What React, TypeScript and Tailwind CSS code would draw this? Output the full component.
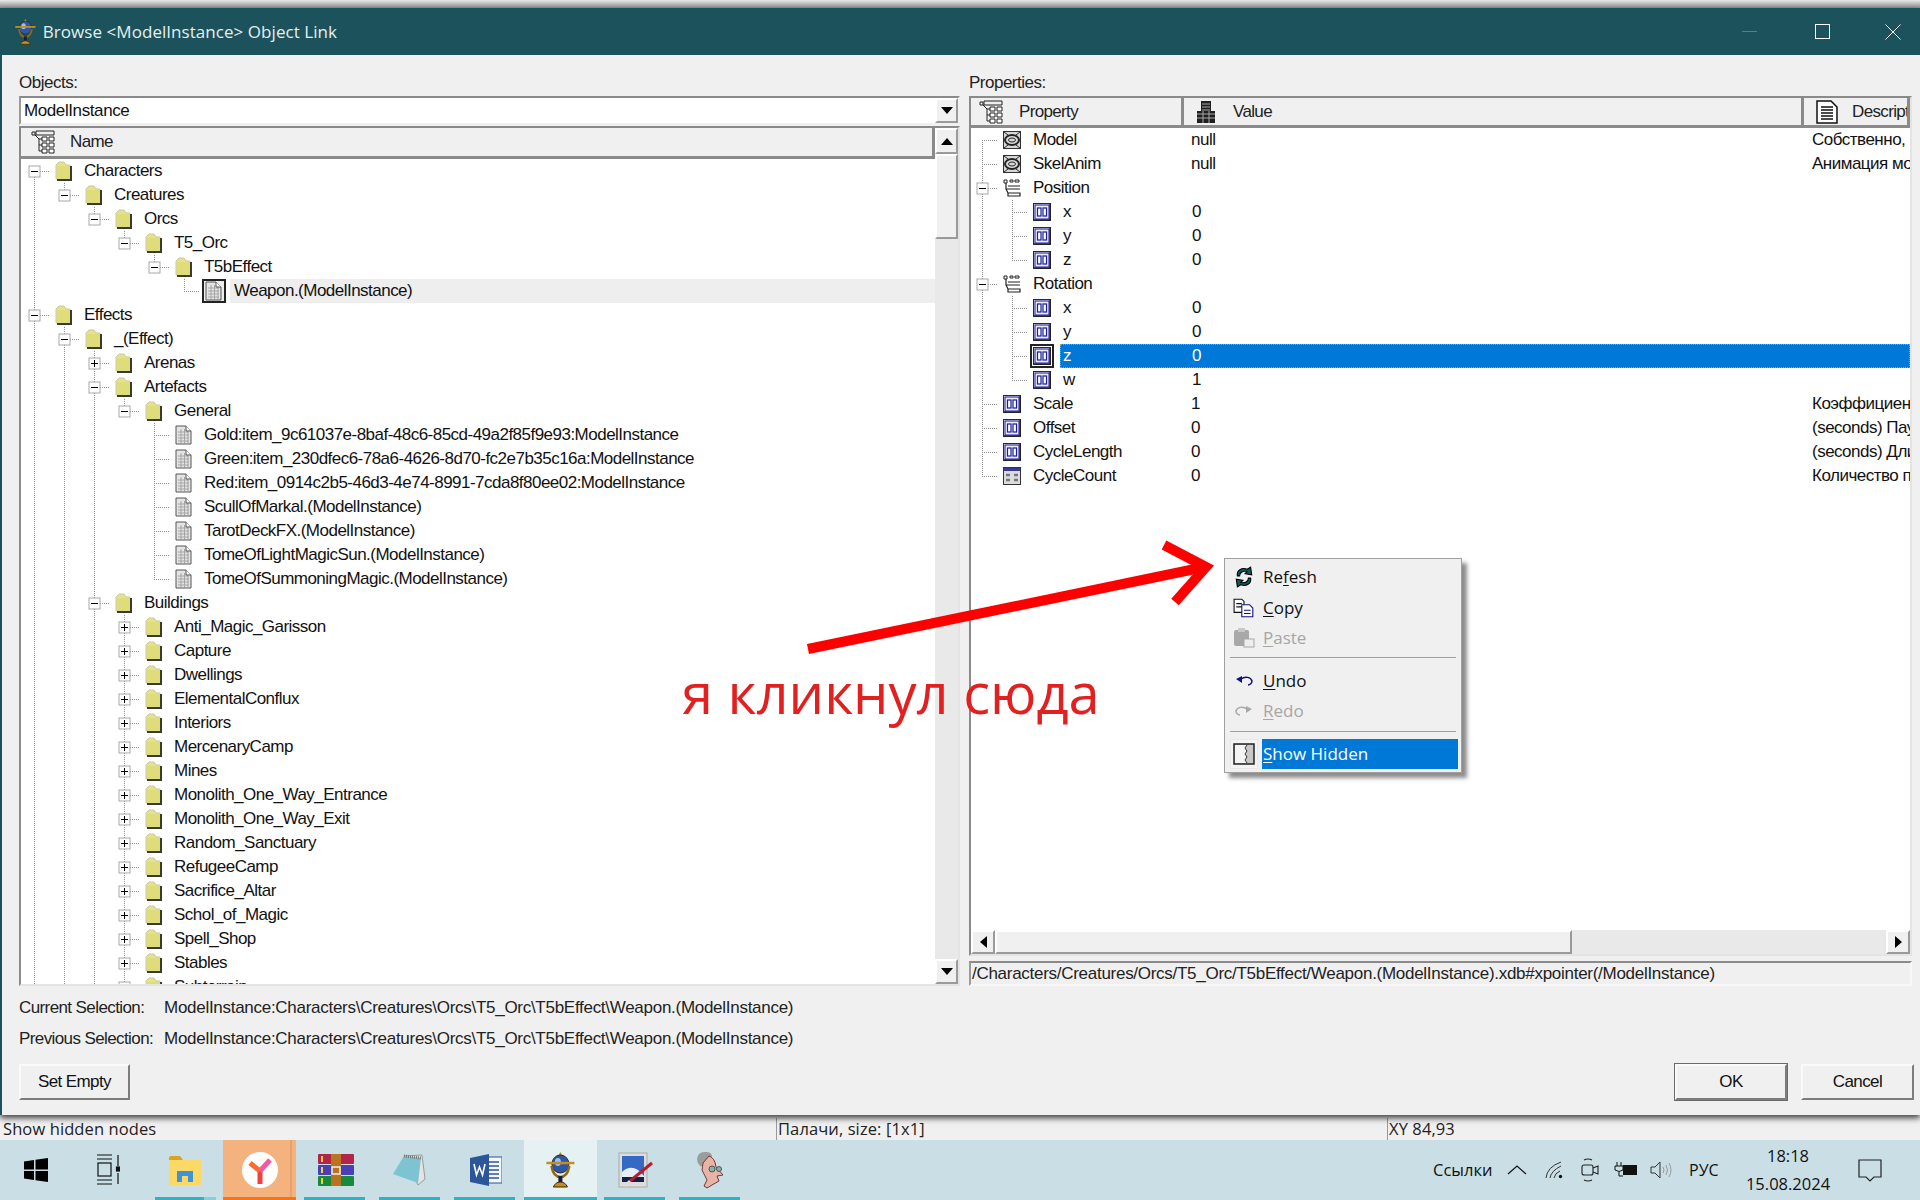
import type { ReactNode } from 'react';

type TreeRow = { name: string; level: number; open?: boolean; file?: boolean; selected?: boolean };

const treeRows: TreeRow[] = [
  { name: 'Characters', level: 0, open: true },
  { name: 'Creatures', level: 1, open: true },
  { name: 'Orcs', level: 2, open: true },
  { name: 'T5_Orc', level: 3, open: true },
  { name: 'T5bEffect', level: 4, open: true },
  { name: 'Weapon.(ModelInstance)', level: 5, file: true, selected: true },
  { name: 'Effects', level: 0, open: true },
  { name: '_(Effect)', level: 1, open: true },
  { name: 'Arenas', level: 2 },
  { name: 'Artefacts', level: 2, open: true },
  { name: 'General', level: 3, open: true },
  { name: 'Gold:item_9c61037e-8baf-48c6-85cd-49a2f85f9e93:ModelInstance', level: 4, file: true },
  { name: 'Green:item_230dfec6-78a6-4626-8d70-fc2e7b35c16a:ModelInstance', level: 4, file: true },
  { name: 'Red:item_0914c2b5-46d3-4e74-8991-7cda8f80ee02:ModelInstance', level: 4, file: true },
  { name: 'ScullOfMarkal.(ModelInstance)', level: 4, file: true },
  { name: 'TarotDeckFX.(ModelInstance)', level: 4, file: true },
  { name: 'TomeOfLightMagicSun.(ModelInstance)', level: 4, file: true },
  { name: 'TomeOfSummoningMagic.(ModelInstance)', level: 4, file: true },
  { name: 'Buildings', level: 2, open: true },
  { name: 'Anti_Magic_Garisson', level: 3 },
  { name: 'Capture', level: 3 },
  { name: 'Dwellings', level: 3 },
  { name: 'ElementalConflux', level: 3 },
  { name: 'Interiors', level: 3 },
  { name: 'MercenaryCamp', level: 3 },
  { name: 'Mines', level: 3 },
  { name: 'Monolith_One_Way_Entrance', level: 3 },
  { name: 'Monolith_One_Way_Exit', level: 3 },
  { name: 'Random_Sanctuary', level: 3 },
  { name: 'RefugeeCamp', level: 3 },
  { name: 'Sacrifice_Altar', level: 3 },
  { name: 'Schol_of_Magic', level: 3 },
  { name: 'Spell_Shop', level: 3 },
  { name: 'Stables', level: 3 },
  { name: 'Subterrain', level: 3 },
];

// rows below the visible part, the guide lines run on to them
const hiddenLevels = [3, 2, 1, 0];

function continues(index: number, level: number, levels: number[]) {
  for (let i = index + 1; i < levels.length; i++) {
    if (levels[i] === level) return true;
    if (levels[i] < level) return false;
  }
  return false;
}

function GuideCell({ show }: { show: boolean }) {
  return (
    <svg width="30" height="24" className="shrink-0">
      {show && <line x1="15.5" y1="0" x2="15.5" y2="24" stroke="#8f8f8f" strokeDasharray="1 1" />}
    </svg>
  );
}

function BranchCell({
  top,
  bottom,
  toggle,
}: {
  top: boolean;
  bottom: boolean;
  toggle?: 'open' | 'closed';
}) {
  return (
    <svg width="30" height="24" className="shrink-0">
      {top && <line x1="15.5" y1="0" x2="15.5" y2="12" stroke="#8f8f8f" strokeDasharray="1 1" />}
      {bottom && <line x1="15.5" y1="12" x2="15.5" y2="24" stroke="#8f8f8f" strokeDasharray="1 1" />}
      <line x1="15" y1="12.5" x2="30" y2="12.5" stroke="#8f8f8f" strokeDasharray="1 1" />
      {toggle && (
        <g>
          <rect x="10" y="7" width="11" height="11" fill="#fff" stroke="#a8a8a8" />
          <line x1="12" y1="12.5" x2="19" y2="12.5" stroke="#000" />
          {toggle === 'closed' && <line x1="15.5" y1="9" x2="15.5" y2="16" stroke="#000" />}
        </g>
      )}
    </svg>
  );
}

function FolderIcon() {
  return (
    <svg width="18" height="20" viewBox="0 0 18 20" className="shrink-0">
      <path d="M1 4 L4 1 H9 L11 4 H15 V18 H1 Z" fill="#e4e28c" stroke="#c9c9a0" />
      <rect x="2" y="5" width="13" height="13" fill="#dfdc7a" />
      <path d="M16 5 V19 H2" fill="none" stroke="#3a3a30" strokeWidth="2" />
    </svg>
  );
}

function FileIcon({ boxed }: { boxed?: boolean }) {
  const page = (
    <svg width="18" height="20" viewBox="0 0 18 20">
      <path d="M1 1 H11 L16 6 V19 H1 Z" fill="#e4e4e4" stroke="#555" />
      <path d="M3 7 H14 M3 10 H14 M3 13 H14 M3 16 H14 M6 4 V18 M9.5 4 V18 M13 7 V18" stroke="#a5a5a5" fill="none" />
      <path d="M11 1 V6 H16" fill="#fff" stroke="#555" />
    </svg>
  );
  if (boxed) {
    return (
      <div className="flex h-[24px] w-[24px] shrink-0 items-center justify-center border-2 border-[#222] bg-[#ededed]">
        {page}
      </div>
    );
  }
  return <div className="flex h-[24px] w-[24px] shrink-0 items-center justify-center">{page}</div>;
}

function ColumnTreeIcon() {
  return (
    <svg width="24" height="24" viewBox="0 0 24 24" className="shrink-0">
      <path d="M1 2 H4 V5 H1 Z M5 3 H23 M4 5 L8 9 V21 M8 9 H11 M8 15 H11 M8 21 H11" fill="none" stroke="#222" />
      <path d="M5 1 H23 V5 H5 Z" fill="#eee" stroke="#222" />
      <path d="M11 7 H16 V11 H11 Z M18 7 H23 V11 H18 Z M11 13 H16 V17 H11 Z M18 13 H23 V17 H18 Z M11 19 H16 V23 H11 Z M18 19 H23 V23 H18 Z" fill="#fff" stroke="#222" />
    </svg>
  );
}

function ValueColumnIcon() {
  return (
    <svg width="20" height="24" viewBox="0 0 20 24" className="shrink-0">
      <path d="M5 1 H15 V11 H19 V23 H1 V11 H5 Z" fill="#1f1f1f" />
      <path d="M6 4 H14 M6 7 H14 M6 10 H14 M1 14 H19 M1 18 H19 M7 11 V23 M13 11 V23" stroke="#aaa" />
    </svg>
  );
}

function DescColumnIcon() {
  return (
    <svg width="22" height="24" viewBox="0 0 22 24" className="shrink-0">
      <path d="M1 1 H15 L21 7 V23 H1 Z" fill="#fff" stroke="#111" strokeWidth="1.5" />
      <path d="M5 7 H17 M5 10 H17 M5 13 H17 M5 16 H17 M5 19 H17" stroke="#111" strokeWidth="1.5" />
    </svg>
  );
}

function ModelIcon() {
  return (
    <svg width="18" height="18" viewBox="0 0 18 18" className="shrink-0">
      <rect width="18" height="18" fill="#303030" />
      <rect x="1" y="1" width="16" height="16" fill="#d8d8d8" />
      <ellipse cx="9" cy="9" rx="7" ry="5" fill="none" stroke="#222" strokeWidth="2" />
      <ellipse cx="9" cy="9" rx="3.5" ry="2" fill="none" stroke="#222" />
      <path d="M1 1 L5 4 M17 1 L13 4 M1 17 L5 14 M17 17 L13 14" stroke="#222" />
    </svg>
  );
}

function GroupIcon() {
  return (
    <svg width="18" height="18" viewBox="0 0 18 18" className="shrink-0">
      <path d="M1 1 H4 V4 H1 Z M7 1 H10 V3 H7 Z M12 1 H16 V3 H12 Z" fill="#fff" stroke="#222" />
      <path d="M3 4 V10 H17 M5 7 H17 M3 10 L5 14 H17 V17 H5 V14" fill="none" stroke="#222" strokeWidth="1.2" />
    </svg>
  );
}

function NumberIcon() {
  return (
    <svg width="18" height="18" viewBox="0 0 18 18" className="shrink-0">
      <rect x="0.5" y="0.5" width="17" height="17" fill="#ececf2" stroke="#2a2a2a" />
      <path d="M17 1 V17 H1" fill="none" stroke="#222" strokeWidth="1.5" />
      <rect x="2" y="2" width="14" height="14" fill="none" stroke="#1a1aa0" />
      <rect x="4.5" y="5" width="3.5" height="8" fill="#fff" stroke="#1a1aa0" strokeWidth="1.2" />
      <rect x="10" y="5" width="3.5" height="8" fill="#fff" stroke="#1a1aa0" strokeWidth="1.2" />
    </svg>
  );
}

function CountIcon() {
  return (
    <svg width="18" height="18" viewBox="0 0 18 18" className="shrink-0">
      <rect x="0.5" y="0.5" width="17" height="17" fill="#dcdce0" stroke="#333" />
      <rect x="1" y="1" width="16" height="3" fill="#3a3a90" />
      <path d="M3 8 H7 M11 8 H15 M3 13 H7 M11 13 H15" stroke="#777" strokeWidth="2.5" />
    </svg>
  );
}

function TreeText({ children }: { children: ReactNode }) {
  return <span className="whitespace-nowrap text-[17px] tracking-[-0.52px] text-[#111]">{children}</span>;
}

function ObjectsTree() {
  const levels = [...treeRows.map((r) => r.level), ...hiddenLevels];
  return (
    <div className="min-h-0 flex-1 overflow-hidden">
      {treeRows.map((row, i) => {
        const guides = Array.from({ length: row.level }, (_, k) => continues(i, k, levels));
        return (
          <div key={row.name} className="-ml-[2px] flex h-6 items-center">
            {guides.map((show, k) => (
              <GuideCell key={k} show={show} />
            ))}
            <BranchCell
              top={i > 0}
              bottom={continues(i, row.level, levels)}
              toggle={row.file ? undefined : row.open ? 'open' : 'closed'}
            />
            <div className="flex w-[30px] shrink-0 justify-center">
              {row.file ? <FileIcon boxed={row.selected} /> : <FolderIcon />}
            </div>
            {row.selected ? (
              <div className="ml-[1px] flex h-6 flex-1 items-center bg-[#eeeeee] pl-[4px]">
                <TreeText>{row.name}</TreeText>
              </div>
            ) : (
              <div className="pl-[5px]">
                <TreeText>{row.name}</TreeText>
              </div>
            )}
          </div>
        );
      })}
    </div>
  );
}

type PropRow = {
  name: string;
  value?: string;
  desc?: string;
  level: number;
  icon: 'model' | 'group' | 'number' | 'count';
  open?: boolean;
  selected?: boolean;
  last?: boolean;
};

const propRows: PropRow[] = [
  { name: 'Model', value: 'null', desc: 'Собственно, модель', level: 0, icon: 'model' },
  { name: 'SkelAnim', value: 'null', desc: 'Анимация модели', level: 0, icon: 'model' },
  { name: 'Position', level: 0, icon: 'group', open: true },
  { name: 'x', value: '0', level: 1, icon: 'number' },
  { name: 'y', value: '0', level: 1, icon: 'number' },
  { name: 'z', value: '0', level: 1, icon: 'number', last: true },
  { name: 'Rotation', level: 0, icon: 'group', open: true },
  { name: 'x', value: '0', level: 1, icon: 'number' },
  { name: 'y', value: '0', level: 1, icon: 'number' },
  { name: 'z', value: '0', level: 1, icon: 'number', selected: true },
  { name: 'w', value: '1', level: 1, icon: 'number', last: true },
  { name: 'Scale', value: '1', desc: 'Коэффициент', level: 0, icon: 'number' },
  { name: 'Offset', value: '0', desc: '(seconds) Пауза', level: 0, icon: 'number' },
  { name: 'CycleLength', value: '0', desc: '(seconds) Длина', level: 0, icon: 'number' },
  { name: 'CycleCount', value: '0', desc: 'Количество повторов', level: 0, icon: 'count', last: true },
];

function PropIcon({ icon }: { icon: PropRow['icon'] }) {
  if (icon === 'model') return <ModelIcon />;
  if (icon === 'group') return <GroupIcon />;
  if (icon === 'count') return <CountIcon />;
  return <NumberIcon />;
}

function PropertiesRows() {
  return (
    <div className="min-h-0 flex-1 overflow-hidden">
      {propRows.map((row, i) => {
        const isLastTop = i >= 14;
        return (
          <div key={i} className="-ml-1 flex h-6 items-center">
            {row.level === 1 && <GuideCell show />}
            <BranchCell
              top={i > 0}
              bottom={row.level === 0 ? !isLastTop : !row.last}
              toggle={row.open ? 'open' : undefined}
            />
            <div className="flex w-[30px] shrink-0 justify-center">
              {row.selected ? (
                <div className="flex h-6 w-[24px] shrink-0 items-center justify-center border-2 border-[#222]">
                  <NumberIcon />
                </div>
              ) : (
                <PropIcon icon={row.icon} />
              )}
            </div>
            <div
              className={
                row.selected
                  ? 'ml-[3px] flex h-6 flex-1 items-center border border-dotted border-[#d98c3c] bg-[#0078d7] pl-[2px] text-white'
                  : 'ml-[6px] flex h-6 flex-1 items-center text-[#111]'
              }
            >
              <span
                className={`shrink-0 whitespace-nowrap text-[17px] tracking-[-0.5px] ${
                  row.level === 1 ? 'w-[129px]' : 'w-[158px]'
                }`}
              >
                {row.name}
              </span>
              <span className="w-[621px] shrink-0 text-[17px] tracking-[-0.5px]">{row.value}</span>
              <span className="whitespace-nowrap text-[17px] tracking-[-0.5px]">{row.desc}</span>
            </div>
          </div>
        );
      })}
    </div>
  );
}

function HeaderCell({
  icon,
  label,
  className,
}: {
  icon: ReactNode;
  label: string;
  className: string;
}) {
  return (
    <div
      className={`flex items-center border-b-[3px] border-r-[3px] border-b-[#8a8a8a] border-r-[#8a8a8a] bg-[#f0f0f0] ${className}`}
    >
      {icon}
      <span className="whitespace-nowrap text-[17px] tracking-[-0.65px] text-[#222]">{label}</span>
    </div>
  );
}

function ScrollBtn({ dir, className }: { dir: 'up' | 'down' | 'left' | 'right'; className: string }) {
  const pts = {
    up: '0,8 12,8 6,1',
    down: '0,1 12,1 6,8',
    left: '8,0 8,12 1,6',
    right: '1,0 1,12 8,6',
  }[dir];
  const size = dir === 'up' || dir === 'down' ? 'w-[12px] h-[9px]' : 'w-[9px] h-[12px]';
  return (
    <div
      className={`flex shrink-0 items-center justify-center border-2 border-b-[#9a9a9a] border-l-white border-r-[#9a9a9a] border-t-white bg-[#f0f0f0] ${className}`}
    >
      <svg className={size}>
        <polygon points={pts} fill="#000" />
      </svg>
    </div>
  );
}

function RaisedButton({ label, className }: { label: string; className: string }) {
  return (
    <div
      className={`flex h-[36px] items-center justify-center border-2 border-b-[#7d7d7d] border-l-[#fafafa] border-r-[#7d7d7d] border-t-[#fafafa] bg-[#f0f0f0] text-[17px] tracking-[-0.6px] text-[#111] ${className}`}
    >
      {label}
    </div>
  );
}

function MenuItem({ icon, disabled, height, children }: { icon: ReactNode; disabled?: boolean; height: string; children: ReactNode }) {
  return (
    <div className={`flex items-center ${height}`}>
      <div className="flex w-[38px] shrink-0 justify-center">{icon}</div>
      <span className={`font-['Open_Sans'] text-[17px] ${disabled ? 'text-[#a6a6a6]' : 'text-[#111]'}`}>{children}</span>
    </div>
  );
}

function underlined(text: string, pos: number) {
  return (
    <>
      {text.slice(0, pos)}
      <span className="underline underline-offset-2">{text[pos]}</span>
      {text.slice(pos + 1)}
    </>
  );
}

function ContextMenu() {
  return (
    <div className="absolute left-[1224px] top-[558px] z-20 h-[215px] w-[238px] border border-[#a0a0a0] bg-[#f0f0f0] pt-[3px] shadow-[5px_5px_4px_rgba(0,0,0,0.45)]">
      <MenuItem
        height="h-[30px]"
        icon={
          <svg width="22" height="22" viewBox="0 0 20 20">
            <path d="M4 9 C3 4 8 1 13 3 L16 1 L17 8 L11 7 L13 5 C9 4 6 6 6 9 Z" fill="#0b5d5d" stroke="#000" />
            <path d="M16 11 C17 16 12 19 7 17 L4 19 L3 12 L9 13 L7 15 C11 16 14 14 14 11 Z" fill="#0b5d5d" stroke="#000" />
          </svg>
        }
      >
        {underlined('Refesh', 2)}
      </MenuItem>
      <MenuItem
        height="h-[31px]"
        icon={
          <svg width="22" height="20" viewBox="0 0 20 18">
            <path d="M1 1 H8 L10 3 V13 H1 Z" fill="#fff" stroke="#111" />
            <path d="M3 5 H8 M3 8 H8" stroke="#111" />
            <path d="M8 6 H15 L18 9 V17 H8 Z" fill="#fff" stroke="#101080" />
            <path d="M10 11 H16 M10 14 H16" stroke="#101080" />
          </svg>
        }
      >
        {underlined('Copy', 0)}
      </MenuItem>
      <MenuItem
        height="h-[30px]"
        disabled
        icon={
          <svg width="22" height="20" viewBox="0 0 22 20">
            <rect x="1" y="2" width="15" height="16" rx="2" fill="#a8a8a8" />
            <rect x="5" y="0" width="7" height="4" fill="#c8c8c8" />
            <rect x="11" y="11" width="10" height="8" fill="#eee" stroke="#a8a8a8" />
          </svg>
        }
      >
        {underlined('Paste', 0)}
      </MenuItem>
      <div className="mx-[5px] mb-[8px] mt-[4px] h-px bg-[#a0a0a0]" />
      <MenuItem
        height="h-[30px]"
        icon={
          <svg width="20" height="12" viewBox="0 0 20 12">
            <path d="M2 4 L8 1 V8 Z" fill="#101080" />
            <path d="M7 4 C11 1 17 2 18 6 C18 8 16 10 14 10" fill="none" stroke="#101080" strokeWidth="1.5" />
          </svg>
        }
      >
        {underlined('Undo', 0)}
      </MenuItem>
      <MenuItem
        height="h-[30px]"
        disabled
        icon={
          <svg width="20" height="12" viewBox="0 0 20 12">
            <path d="M18 4 L12 1 V8 Z" fill="#a8a8a8" />
            <path d="M13 4 C9 1 3 2 2 6 C2 8 4 10 6 10" fill="none" stroke="#a8a8a8" strokeWidth="1.5" />
          </svg>
        }
      >
        {underlined('Redo', 0)}
      </MenuItem>
      <div className="mx-[5px] mb-[7px] mt-[5px] h-px bg-[#a0a0a0]" />
      <div className="flex h-[30px] items-center pl-[5px] pr-[3px]">
        <div className="flex h-[30px] w-[28px] shrink-0 items-center justify-center border border-[#e8e8e8] bg-[#f4f4f4]">
          <svg width="22" height="22" viewBox="0 0 22 22">
            <rect x="1" y="1" width="20" height="20" fill="#c8c8c8" stroke="#222" strokeWidth="1.5" />
            <rect x="2" y="2" width="11" height="18" fill="#f4f4f4" />
            <path d="M14 2 L12 5 L14 8 L12 11 L14 14 L12 17 L14 20" fill="none" stroke="#333" />
          </svg>
        </div>
        <div className="ml-[4px] flex h-[30px] flex-1 items-center bg-[#0078d7] pl-[1px] font-['Open_Sans'] text-[17px] text-white">
          {underlined('Show Hidden', 0)}
        </div>
      </div>
    </div>
  );
}

function AnnotationArrow() {
  return (
    <svg className="absolute left-0 top-0 z-10" width="1920" height="1200">
      <path d="M808 649 L1200 568" stroke="#ff0000" strokeWidth="10" fill="none" />
      <path d="M1164 545 L1206 567 L1175 602" stroke="#ff0000" strokeWidth="10" fill="none" />
    </svg>
  );
}

function TaskButton({ children, active, bar, className }: { children: ReactNode; active?: boolean; bar?: string; className?: string }) {
  return (
    <div className={`relative flex h-full w-[75px] shrink-0 items-center justify-center ${className ?? ''}`}>
      {active && <div className="absolute inset-y-0 left-[1px] right-[1px] bg-[#e6f1f4]" />}
      <div className="relative">{children}</div>
      {bar && <div className={`absolute bottom-0 h-[3px] bg-[#2fb3c4] ${bar}`} />}
    </div>
  );
}

function Taskbar() {
  return (
    <div className="flex h-[60px] items-center bg-[#c9dfe5]">
      <div className="flex h-full w-[72px] shrink-0 items-center justify-center">
        <svg width="24" height="24" viewBox="0 0 24 24">
          <path d="M0 3.5 L10 2 V11.5 H0 Z M11.5 1.8 L24 0 V11.5 H11.5 Z M0 13 H10 V22 L0 20.5 Z M11.5 13 H24 V24 L11.5 22.2 Z" fill="#000" />
        </svg>
      </div>
      <div className="flex h-full w-[76px] shrink-0 items-center justify-center pr-[4px]">
        <svg width="24" height="36" viewBox="0 0 24 36" fill="none" stroke="#111" strokeWidth="1.2">
          <path d="M1 3 H16 M1 7 H16" />
          <rect x="2" y="11" width="13" height="13" />
          <path d="M1 28 H16 M1 32 H16" />
          <path d="M22 3 V14 M22 21 V32" />
          <rect x="20.5" y="15" width="3" height="4" fill="#111" />
        </svg>
      </div>
      <TaskButton bar="left-[7px] w-[61px] bg-gradient-to-r from-[#2fb3c4] from-80% to-[#86d0da] to-80%" className="pr-[2px]">
        <svg width="32" height="30" viewBox="0 0 32 30">
          <path d="M0 3 Q0 1 2 1 H11 L14 5 H0 Z" fill="#d9a520" />
          <rect x="0" y="5" width="32" height="25" rx="1" fill="#fcd967" />
          <path d="M8 16 H24 V27 H19 V21 H13 V27 H8 Z" fill="#3f94d6" />
        </svg>
      </TaskButton>
      <div className="relative flex h-full w-[73px] shrink-0 items-center justify-center bg-[#f4b27e]">
        <svg width="36" height="36" viewBox="0 0 36 36">
          <circle cx="18" cy="18" r="18" fill="#fff" />
          <path d="M18 32 V19" stroke="#f43f3f" strokeWidth="5" />
          <path d="M8 11 L18 19" stroke="#fb6b2c" strokeWidth="5" />
          <path d="M28 8 L18 19" stroke="#f45a9c" strokeWidth="5" />
        </svg>
        <div className="absolute inset-y-0 right-[4px] w-[2px] bg-[#e6a16d]" />
        <div className="absolute inset-x-0 bottom-0 h-[3px] bg-[#f97316]" />
      </div>
      <div className="w-[2px] shrink-0" />
      <TaskButton bar="left-[6px] w-[61px]">
        <svg width="36" height="32" viewBox="0 0 36 32">
          <rect x="0" y="0" width="36" height="10" rx="1" fill="#b3234a" />
          <rect x="0" y="11" width="36" height="10" rx="1" fill="#4a3fb5" />
          <rect x="0" y="22" width="36" height="10" rx="1" fill="#178a3c" />
          <path d="M4 2 V8 M4 13 V19 M4 24 V30" stroke="#f2d13d" strokeWidth="2" />
          <rect x="13" y="0" width="10" height="32" fill="#b8741f" />
          <rect x="14" y="13" width="8" height="7" fill="none" stroke="#eee" strokeWidth="1.5" />
        </svg>
      </TaskButton>
      <TaskButton bar="left-[6px] w-[61px]" className="pr-[3px]">
        <svg width="34" height="34" viewBox="0 0 34 34">
          <path d="M12 3 L30 2 L33 26 L26 32 Z" fill="#e4e4e4" stroke="#999" />
          <path d="M12 3 L29 5 L26 30 L1 21 Z" fill="#7ec3d2" />
          <path d="M12 3 L29 5" stroke="#777" strokeWidth="3" strokeDasharray="1 1" />
        </svg>
      </TaskButton>
      <TaskButton bar="left-[6px] w-[61px]">
        <svg width="32" height="32" viewBox="0 0 32 32">
          <rect x="14" y="3" width="18" height="26" fill="#f4f7fb" stroke="#2b579a" />
          <path d="M18 8 H29 M18 12 H29 M18 16 H29 M18 20 H29 M18 24 H29" stroke="#2b579a" strokeWidth="1.5" />
          <path d="M0 4 L19 0 V32 L0 28 Z" fill="#2b579a" />
          <path d="M4 10 L6.5 21 L9.5 13 L12.5 21 L15 10" fill="none" stroke="#fff" strokeWidth="1.6" />
        </svg>
      </TaskButton>
      <TaskButton active bar="left-[1px] right-[1px]">
        <GobletIcon size={36} />
      </TaskButton>
      <TaskButton bar="left-[6px] w-[61px]">
        <svg width="36" height="36" viewBox="0 0 36 36">
          <rect x="1" y="1" width="28" height="34" fill="#ddd" stroke="#aaa" />
          <rect x="4" y="4" width="22" height="26" fill="#3469c4" />
          <path d="M4 20 Q15 10 26 24 V30 H4 Z" fill="#e8eef8" />
          <rect x="4" y="25" width="22" height="5" fill="#16223f" />
          <path d="M34 11 L12 29" stroke="#b71c2c" strokeWidth="3" />
          <path d="M12 29 L7 34" stroke="#ddd" strokeWidth="3" />
        </svg>
      </TaskButton>
      <TaskButton bar="left-[6px] w-[61px]" className="pr-[3px]">
        <svg width="28" height="38" viewBox="0 0 28 38">
          <path d="M2 8 Q3 0 11 1 Q17 1 17 6 L14 13 Q6 16 5 15 Q2 12 2 8 Z" fill="#9c9c9c" />
          <path d="M8 12 L14 5 Q20 7 21 16 L28 24 L22 25 L24 30 L17 34 L12 37 L9 35 L12 29 L7 19 Z" fill="#e9b3a6" stroke="#6d3b3b" />
          <circle cx="17" cy="18" r="3" fill="#7fb5b0" stroke="#555" />
          <circle cx="24" cy="18" r="2.5" fill="#7fb5b0" stroke="#555" />
        </svg>
      </TaskButton>
      <div className="flex-1" />
      <Tray />
    </div>
  );
}

function GobletIcon({ size }: { size: number }) {
  return (
    <svg width={size * 0.8} height={size} viewBox="0 0 28 36">
      <path d="M14 0 L17 5 H11 Z" fill="#c48e1c" />
      <ellipse cx="14" cy="12" rx="8.5" ry="9" fill="#2f56a8" stroke="#2a2a10" />
      <ellipse cx="11.5" cy="10" rx="3" ry="4" fill="#9fc0ea" />
      <path d="M0 11 H28" stroke="#c48e1c" strokeWidth="2.5" />
      <path d="M5 14 Q7 25 14 25 Q21 25 23 14" fill="none" stroke="#8d6a14" strokeWidth="2.5" />
      <rect x="12" y="24" width="4" height="7" fill="#1c1c3a" />
      <path d="M7 35 Q9 30 14 30 Q19 30 21 35 Z" fill="#c48e1c" stroke="#3a2a08" />
    </svg>
  );
}

function Tray() {
  return (
    <div className="flex h-full items-center font-['Open_Sans'] text-[16.5px] text-[#111]">
      <span className="w-[62px] whitespace-nowrap">Ссылки</span>
      <svg width="20" height="10" viewBox="0 0 20 10" className="ml-[12px]">
        <path d="M1 9 L10 1 L19 9" fill="none" stroke="#111" strokeWidth="1.2" />
      </svg>
      <svg width="20" height="18" viewBox="0 0 20 18" className="ml-[18px]" fill="none" stroke="#333">
        <path d="M1 17 Q2 6 16 1 M5 17 Q6 10 16 5 M9 17 Q10 12 15 10" />
        <circle cx="15.5" cy="15.5" r="1.7" fill="#111" stroke="none" />
      </svg>
      <svg width="18" height="24" viewBox="0 0 18 24" className="ml-[16px]" fill="none" stroke="#222" strokeWidth="1.1">
        <rect x="1" y="7" width="11" height="10" rx="2" />
        <path d="M12 10 L17 8 V16 L12 14 M3 2 Q7 0 11 2 M3 22 Q7 24 11 22" />
      </svg>
      <svg width="24" height="18" viewBox="0 0 24 18" className="ml-[15px]">
        <path d="M3 1 V5 M7 1 V5 M1 5 H9 V9 Q5 12 1 9 Z M5 11 V15 H9" fill="none" stroke="#111" />
        <rect x="9" y="4" width="14" height="10" fill="#111" />
      </svg>
      <svg width="24" height="18" viewBox="0 0 24 18" className="ml-[12px]" fill="none" stroke="#333">
        <path d="M1 6 H5 L10 1 V17 L5 12 H1 Z" />
        <path d="M13 6 Q15 9 13 12 M16 4 Q19 9 16 14 M19 2 Q23 9 19 16" stroke="#999" />
      </svg>
      <span className="ml-[15px] w-[31px] whitespace-nowrap text-[16px]">РУС</span>
      <div className="ml-[24px] flex w-[88px] flex-col items-center leading-[28px]">
        <span>18:18</span>
        <span>15.08.2024</span>
      </div>
      <svg width="24" height="24" viewBox="0 0 24 24" className="ml-[26px] mr-[38px]" fill="none" stroke="#222" strokeWidth="1.2">
        <path d="M1 2 H23 V19 H16 L12 23 L8 19 H1 Z" />
      </svg>
    </div>
  );
}

export default function App() {
  return (
    <div className="relative flex h-[1200px] w-[1920px] flex-col overflow-hidden bg-white font-['Liberation_Sans',sans-serif]">
      <div className="h-2 bg-gradient-to-b from-[#e9e9e9] to-[#8f8f8f]" />
      {/* dialog */}
      <div className="relative z-[1] flex h-[1107px] flex-col border-l-2 border-[#1b525c] bg-[#f0f0f0] shadow-[0_3px_6px_rgba(0,0,0,0.75)]">
        <div className="flex h-[47px] shrink-0 items-center bg-[#1b525c] text-[#e6efef]">
          <div className="ml-[13px] mr-[7px]">
            <GobletIcon size={26} />
          </div>
          <span className="font-['Open_Sans'] text-[17px] tracking-[0.05px]">Browse &lt;ModelInstance&gt; Object Link</span>
          <div className="flex-1" />
          <div className="mr-[58px] h-px w-[15px] bg-[#54808a]" />
          <div className="mr-[55px] h-[15px] w-[15px] border border-white" />
          <svg width="16" height="16" viewBox="0 0 16 16" className="mr-[19px]">
            <path d="M0.5 0.5 L15.5 15.5 M15.5 0.5 L0.5 15.5" stroke="#fff" />
          </svg>
        </div>
        <div className="flex h-[931px] shrink-0 pl-[17px] pr-2">
          {/* objects */}
          <div className="flex w-[941px] shrink-0 flex-col">
            <div className="flex h-[41px] items-end pb-[1px] text-[17px] tracking-[-0.5px] text-[#222]">Objects:</div>
            <div className="flex h-[29px] shrink-0 items-center border-2 border-b-[#f0f0f0] border-l-[#9a9a9a] border-r-[#f0f0f0] border-t-[#8a8a8a] bg-white pl-[3px] text-[17px] tracking-[-0.4px] text-[#111]">
              <span className="flex-1">ModelInstance</span>
              <ScrollBtn dir="down" className="h-[25px] w-[23px]" />
            </div>
            <div className="mt-[1px] flex h-[860px] shrink-0 border-2 border-b-[#e4e4e4] border-l-[#8a8a8a] border-r-[#e4e4e4] border-t-[#8a8a8a] bg-white">
              <div className="flex min-w-0 flex-1 flex-col">
                <HeaderCell
                  className="h-[31px] shrink-0 gap-[15px] pl-[10px]"
                  icon={<ColumnTreeIcon />}
                  label="Name"
                />
                <ObjectsTree />
              </div>
              <div className="flex w-[23px] shrink-0 flex-col bg-[#e9e9e9]">
                <ScrollBtn dir="up" className="h-[26px]" />
                <div className="h-[85px] shrink-0 border-2 border-b-[#9a9a9a] border-l-white border-r-[#9a9a9a] border-t-white bg-[#f0f0f0]" />
                <div className="flex-1" />
                <ScrollBtn dir="down" className="h-[25px]" />
              </div>
            </div>
          </div>
          {/* properties */}
          <div className="ml-[9px] flex min-w-0 flex-1 flex-col">
            <div className="flex h-[41px] items-end pb-[1px] text-[17px] tracking-[-0.5px] text-[#222]">Properties:</div>
            <div className="flex h-[860px] shrink-0 flex-col border-2 border-b-[#e4e4e4] border-l-[#8a8a8a] border-r-[#e4e4e4] border-t-[#8a8a8a] bg-white">
              <div className="flex h-[30px] shrink-0">
                <HeaderCell className="w-[213px] gap-[16px] pl-[8px]" icon={<ColumnTreeIcon />} label="Property" />
                <HeaderCell className="w-[620px] gap-[17px] pl-[12px]" icon={<ValueColumnIcon />} label="Value" />
                <HeaderCell className="min-w-0 flex-1 gap-[14px] overflow-hidden pl-[12px]" icon={<DescColumnIcon />} label="Descript" />
              </div>
              <PropertiesRows />
              <div className="flex h-[24px] shrink-0 bg-[#e9e9e9]">
                <ScrollBtn dir="left" className="w-[24px]" />
                <div className="w-[577px] shrink-0 border-2 border-b-[#9a9a9a] border-l-white border-r-[#9a9a9a] border-t-white bg-[#f0f0f0]" />
                <div className="flex-1" />
                <ScrollBtn dir="right" className="w-[24px]" />
              </div>
            </div>
            <div className="mt-[5px] flex h-[25px] shrink-0 items-center border-2 border-b-[#f8f8f8] border-l-[#9a9a9a] border-r-[#f8f8f8] border-t-[#8a8a8a] bg-[#f0f0f0] pl-[1px] text-[17px] tracking-[-0.28px] text-[#222]">
              <span className="whitespace-nowrap">/Characters/Creatures/Orcs/T5_Orc/T5bEffect/Weapon.(ModelInstance).xdb#xpointer(/ModelInstance)</span>
            </div>
          </div>
        </div>
        {/* footer */}
        <div className="flex h-[129px] flex-col pl-[17px] pr-[6px] pt-[6px] text-[17px] tracking-[-0.28px] text-[#222]">
          <div className="flex h-[31px] items-center">
            <span className="w-[145px] shrink-0 whitespace-nowrap tracking-[-0.6px]">Current Selection:</span>
            <span>ModelInstance:Characters\Creatures\Orcs\T5_Orc\T5bEffect\Weapon.(ModelInstance)</span>
          </div>
          <div className="flex h-[31px] items-center">
            <span className="w-[145px] shrink-0 whitespace-nowrap tracking-[-0.6px]">Previous Selection:</span>
            <span>ModelInstance:Characters\Creatures\Orcs\T5_Orc\T5bEffect\Weapon.(ModelInstance)</span>
          </div>
          <div className="mt-[10px] flex items-center">
            <RaisedButton label="Set Empty" className="w-[111px]" />
            <div className="flex-1" />
            <RaisedButton label="OK" className="w-[112px] shadow-[0_0_0_1px_#6a6a6a]" />
            <div className="w-[14px]" />
            <RaisedButton label="Cancel" className="w-[113px]" />
          </div>
        </div>
      </div>
      {/* status bar of the window behind */}
      <div className="flex h-[25px] shrink-0 items-end bg-[#f0f0f0] font-['Open_Sans'] text-[16.5px] leading-[22px] tracking-[0.1px] text-[#222]">
        <span className="w-[776px] shrink-0 pl-[3px]">Show hidden nodes</span>
        <span className="w-[611px] shrink-0 border-l border-[#999] pl-[1px]">Палачи, size: [1x1]</span>
        <span className="flex-1 border-l border-[#999] pl-[1px]">XY 84,93</span>
      </div>
      <Taskbar />
      <ContextMenu />
      <AnnotationArrow />
      <div className="absolute left-[682px] top-[654px] z-10 whitespace-nowrap font-['Open_Sans'] text-[56px] leading-[76px] text-[#e32020]">
        я кликнул сюда
      </div>
    </div>
  );
}
